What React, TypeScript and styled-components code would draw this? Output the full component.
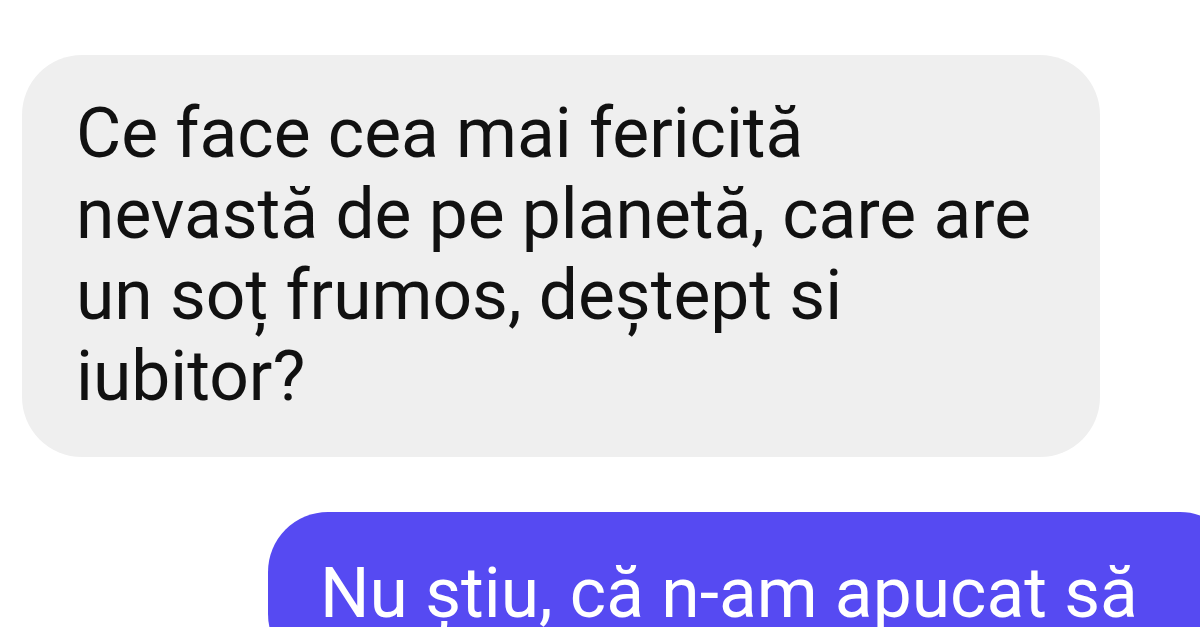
import React from "react";
import styled, { createGlobalStyle } from "styled-components";

const Global = createGlobalStyle`
  html, body { margin: 0; padding: 0; background: #ffffff; overflow: hidden; }
  body { width: 1200px; height: 627px; font-family: Roboto, "Noto Sans", "Liberation Sans", sans-serif; }
`;

const Thread = styled.div`
  display: flex;
  flex-direction: column;
  padding-top: 55px;
  gap: 55px;
  width: 1200px;
  height: 627px;
  overflow: hidden;
`;

const Bubble = styled.div<{ $out?: boolean }>`
  box-sizing: border-box;
  margin-left: ${(p) => (p.$out ? "268px" : "22px")};
  width: ${(p) => (p.$out ? "972px" : "1078px")};
  padding: ${(p) => (p.$out ? "41px 40px 40px 52px" : "38px 40px 40px 54px")};
  border-radius: 60px;
  background: ${(p) => (p.$out ? "#564af2" : "#efefef")};
  color: ${(p) => (p.$out ? "#ffffff" : "#111111")};
  font-size: 69.5px;
  line-height: 81px;
  flex-shrink: 0;
`;

const Line = styled.div`
  white-space: nowrap;
`;

export default function App() {
  return (
    <>
      <Global />
      <Thread>
        <Bubble>
          <Line>Ce face cea mai fericită</Line>
          <Line>nevastă de pe planetă, care are</Line>
          <Line>un soț frumos, deștept si</Line>
          <Line>iubitor?</Line>
        </Bubble>
        <Bubble $out>
          <Line>Nu știu, că n-am apucat să</Line>
        </Bubble>
      </Thread>
    </>
  );
}
